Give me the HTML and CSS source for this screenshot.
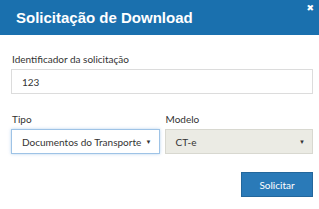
FILE: index.html
```html
<!DOCTYPE html>
<html lang="pt-BR">
<head>
    <meta charset="UTF-8">
    <meta name="viewport" content="width=device-width, initial-scale=1.0">
    <title>Solicitação de Download</title>
    <link rel="stylesheet" href="styles.css">
</head>
<body>
    <div class="modal">
        <div class="modal-header">
            <h4 class="modal-title">Solicitação de Download</h4>
            <span class="close">&#x2716;</span>
        </div>
        <div class="modal-body">
            <div class="field">
                <label>Identificador da solicitação</label>
                <div class="input">123</div>
            </div>
            <div class="row">
                <div class="field">
                    <label>Tipo</label>
                    <div class="select focus">
                        <span>Documentos do Transporte</span>
                        <span class="caret">&#9660;</span>
                    </div>
                </div>
                <div class="field">
                    <label>Modelo</label>
                    <div class="select disabled">
                        <span>CT-e</span>
                        <span class="caret">&#9660;</span>
                    </div>
                </div>
            </div>
            <div class="actions">
                <button class="btn">Solicitar</button>
            </div>
        </div>
    </div>
</body>
</html>
```
FILE: styles.css
```css
/* Reset default styles */
body, html, div, h4, label, button {
    margin: 0;
    padding: 0;
}

body {
    background: #fff;
    font-family: Lato, sans-serif;
    color: #333;
}

.modal {
    width: 319px;
}

.modal-header {
    position: relative;
    height: 35px;
    background: #1a70ae;
    display: flex;
    align-items: center;
    padding-left: 16px;
}

.modal-title {
    font-family: "Liberation Sans", Arial, sans-serif;
    font-weight: bold;
    font-size: 15px;
    color: #fff;
}

.close {
    position: absolute;
    top: 3px;
    right: 5px;
    color: #fff;
    font-size: 9px;
    font-family: "DejaVu Sans", sans-serif;
    font-weight: bold;
}

.modal-body {
    padding: 17px 6px 0 11px;
}

.field label {
    display: block;
    font-size: 10px;
    line-height: 14px;
    margin-left: 1px;
    margin-bottom: 3px;
}

.input, .select {
    box-sizing: border-box;
    height: 25px;
    border: 1px solid #dcdcdc;
    padding: 0 10px;
    font-size: 10px;
    white-space: nowrap;
    display: flex;
    align-items: center;
}

.row {
    display: flex;
    gap: 5px;
    margin-top: 18px;
}

.row .field {
    flex: 1;
}

.select {
    justify-content: space-between;
    padding-right: 7px;
}

.select.focus {
    border-color: #9ec3e6;
    box-shadow: 0 0 3px rgba(102, 160, 220, 0.45);
}

.select.disabled {
    background: #ebebe4;
    border-color: #d8d8d0;
}

.caret {
    font-size: 6px;
    color: #333;
}

.actions {
    display: flex;
    justify-content: flex-end;
    margin-top: 18px;
}

.btn {
    width: 72px;
    height: 25px;
    background: #2a7ab8;
    border: 1px solid #23679c;
    color: #fff;
    font-family: Lato, sans-serif;
    font-size: 10px;
}
```
